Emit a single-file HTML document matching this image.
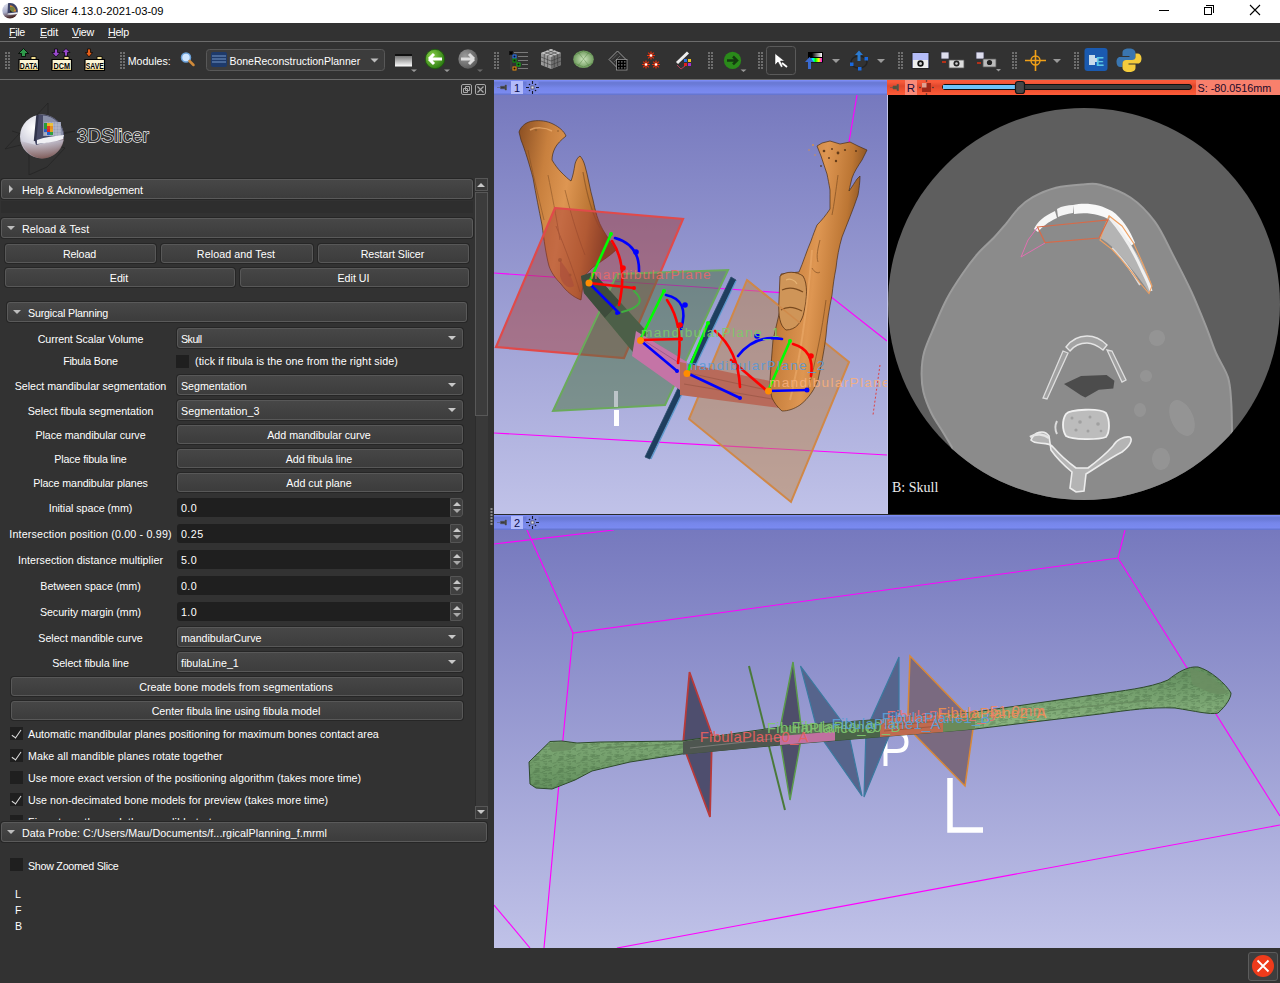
<!DOCTYPE html>
<html><head><meta charset="utf-8">
<style>
*{box-sizing:border-box;margin:0;padding:0}
html,body{width:1280px;height:983px;overflow:hidden;background:#323232;font-family:"Liberation Sans",sans-serif;color:#ffffff;font-size:10.7px}
.a{position:absolute}
.t{position:absolute;white-space:nowrap;line-height:12px}
.btn{position:absolute;border:1px solid #585858;border-radius:3px;background:linear-gradient(#464646,#3c3c3c);box-shadow:0 0 0 1px #262626}
.btn span{position:absolute;left:0;right:2px;top:3px;text-align:center;white-space:nowrap;line-height:12px}
.cmb{position:absolute;border:1px solid #585858;border-radius:3px;background:linear-gradient(#474747,#3d3d3d);box-shadow:0 0 0 1px #262626}
.cmb span{position:absolute;left:3px;top:4px;white-space:nowrap;line-height:12px}
.cmb i{position:absolute;right:6px;top:7px;width:0;height:0;border-left:4px solid transparent;border-right:4px solid transparent;border-top:4px solid #c8c8c8}
.spn{position:absolute;background:#1f1f1f;border-radius:3px}
.spn span{position:absolute;left:4px;top:4px;white-space:nowrap;line-height:12px}
.spn b{position:absolute;right:0;top:0;bottom:0;width:13px;background:#404040;border:1px solid #555;border-radius:0 3px 3px 0}
.spn b:before{content:"";position:absolute;left:2px;top:3px;border-left:4px solid transparent;border-right:4px solid transparent;border-bottom:4px solid #c8c8c8}
.spn b:after{content:"";position:absolute;left:2px;top:10px;border-left:4px solid transparent;border-right:4px solid transparent;border-top:4px solid #a8a8a8}
.chk{position:absolute;width:13px;height:13px;background:#1f1f1f}
.chk.on:after{content:"";position:absolute;left:4px;top:1px;width:4px;height:9px;border-right:1.6px solid #e0e0e0;border-bottom:1.6px solid #e0e0e0;transform:rotate(35deg)}
.lbl{position:absolute;width:176px;text-align:center;white-space:nowrap;line-height:12px}
.coll{position:absolute;border:1px solid #5a5a5a;border-radius:3px;background:linear-gradient(#474747,#3c3c3c);box-shadow:0 0 0 1px #262626}
.coll span{position:absolute;left:20px;top:4px;white-space:nowrap;line-height:12px}
.tri-r{position:absolute;left:7px;top:5px;border-top:4px solid transparent;border-bottom:4px solid transparent;border-left:4px solid #bdbdbd}
.tri-d{position:absolute;left:5px;top:7px;border-left:4px solid transparent;border-right:4px solid transparent;border-top:4px solid #bdbdbd}
.grip{position:absolute;width:6px;background-image:radial-gradient(circle,#6a6a6a 0.9px,transparent 1.1px);background-size:3px 3px}
.ic{position:absolute}
</style></head><body>
<!-- title bar -->
<div class="a" style="left:0;top:0;width:1280px;height:23px;background:#fff"></div>
<svg class="a" style="left:0;top:0" width="22" height="23"><defs><linearGradient id="tsp" x1="0" y1="0" x2="0.3" y2="1"><stop offset="0" stop-color="#e8eaf4"/><stop offset="0.6" stop-color="#a8acc8"/><stop offset="1" stop-color="#4a2a2a"/></linearGradient></defs>
<circle cx="10" cy="10.8" r="7.7" fill="url(#tsp)"/>
<path d="M8 3.3C9 3.1 9.5 3 10 3C14.3 3 17.7 6.5 17.7 10.8L17.7 12.5L7.5 13.8Z" fill="#3e4466"/>
<path d="M10 5.2C13 5.5 15.8 8 16 11.5L10.3 12Z" fill="#e08a30"/>
<path d="M10 7L13 6.5L15 9L13 12L10.3 12Z" fill="#2a7a4a" opacity="0.6"/>
<path d="M10 10L12 12L10.3 12Z" fill="#111"/>
<path d="M7.8 13.5L17.6 12.3L17 14C14 14.6 10 14.8 7.5 14.5Z" fill="#f0f0f4"/>
</svg>
<div class="t" style="left:23px;top:5px;color:#000;font-size:11.2px">3D Slicer 4.13.0-2021-03-09</div>
<div class="a" style="left:1159px;top:10px;width:10px;height:1px;background:#000"></div>
<div class="a" style="left:1204px;top:7px;width:8px;height:8px;border:1px solid #000;background:#fff"></div>
<div class="a" style="left:1206px;top:5px;width:8px;height:8px;border-top:1px solid #000;border-right:1px solid #000"></div>
<svg class="a" style="left:1249px;top:4px" width="12" height="12"><path d="M1 1L11 11M11 1L1 11" stroke="#000" stroke-width="1.1"/></svg>

<!-- menubar -->
<div class="a" style="left:0;top:23px;width:1280px;height:18px;background:#323232"></div>
<div class="t" style="left:9px;top:26px;font-size:10.7px;letter-spacing:-0.380px">File</div>
<div class="t" style="left:40px;top:26px;font-size:10.7px;letter-spacing:-0.104px">Edit</div>
<div class="t" style="left:72px;top:26px;font-size:10.7px;letter-spacing:-0.268px">View</div>
<div class="t" style="left:108px;top:26px;font-size:10.7px;letter-spacing:-0.295px">Help</div>
<div class="a" style="left:9px;top:37px;width:7px;height:1px;background:#ddd"></div><div class="a" style="left:40px;top:37px;width:7px;height:1px;background:#ddd"></div><div class="a" style="left:72px;top:37px;width:7px;height:1px;background:#ddd"></div><div class="a" style="left:108px;top:37px;width:8px;height:1px;background:#ddd"></div>
<div class="a" style="left:0;top:41px;width:1280px;height:1px;background:#6c6c6c"></div>
<div class="a" style="left:0;top:79px;width:1280px;height:1px;background:#6c6c6c"></div>

<!-- left panel -->
<svg class="a" style="left:0;top:95px" width="80" height="80">
<g stroke="#242424" stroke-width="0.8" fill="none"><path d="M5 54L48 8L48 40L75 36L5 54"/><path d="M12 36L65 53L47 72L29 80"/><path d="M29 28V80"/></g>
<defs><radialGradient id="sph" cx="0.32" cy="0.3" r="0.85"><stop offset="0" stop-color="#ffffff"/><stop offset="0.45" stop-color="#d4d4e0"/><stop offset="0.8" stop-color="#9a8c98"/><stop offset="1" stop-color="#6a4a48"/></radialGradient>
<linearGradient id="sphb" x1="0" y1="0" x2="0" y2="1"><stop offset="0" stop-color="#c8c8d8"/><stop offset="1" stop-color="#7a5048"/></linearGradient></defs>
<circle cx="42" cy="41.5" r="22" fill="url(#sph)"/>
<path d="M20.5 46C24 55 32 63.5 42 63.5C52 63.5 61 56 63.5 45L36 50Z" fill="url(#sphb)" opacity="0.7"/>
<path d="M37.5 20C39.5 19.6 41 19.5 42 19.5C54 19.5 64 29.5 64 41.5L64 43L36 50L34.5 45Z" fill="#474a66"/>
<path d="M43 20.5C54 21 63 30 63.5 41L43 41Z" fill="#8a90a8"/>
<path d="M44 27h17v14h-17z" fill="#9aa0b8"/><path d="M44 30h17M44 33h17M44 36h17M44 39h17M47 27v14M50 27v14M53 27v14M56 27v14M59 27v14" stroke="#c8ccd8" stroke-width="0.5"/>
<g><rect x="44" y="28" width="3" height="3" fill="#2a9a3a"/><rect x="47" y="28" width="3" height="3" fill="#e8b820"/><rect x="50" y="28" width="3" height="3" fill="#e8c040"/><rect x="44" y="31" width="3" height="3" fill="#2a9a3a"/><rect x="47" y="31" width="3" height="3" fill="#e03a20"/><rect x="50" y="31" width="3" height="3" fill="#e89020"/><rect x="44" y="34" width="3" height="3" fill="#2a60c8"/><rect x="47" y="34" width="3" height="3" fill="#e02a20"/><rect x="50" y="34" width="3" height="3" fill="#e8a020"/><rect x="47" y="37" width="3" height="3" fill="#2060d0"/><rect x="50" y="37" width="3" height="3" fill="#30a040"/></g>
<path d="M37 45C45 42 55 41 64 40L63 44C55 47 45 48 37 49Z" fill="#f0f0f4"/>
<path d="M37.5 20L35 46" stroke="#30334a" stroke-width="2.5"/>
</svg>
<div class="t" style="left:77px;top:126px;font-size:19px;line-height:19px;color:#2e2e2e;-webkit-text-stroke:1.3px #f0f0f0;paint-order:stroke fill">3DSlicer</div>
<div class="a" style="left:461px;top:84px;width:11px;height:11px;border:1px solid #a8a8a8;border-radius:2px"></div>
<div class="a" style="left:475px;top:84px;width:11px;height:11px;border:1px solid #a8a8a8;border-radius:2px"></div>
<svg class="a" style="left:475px;top:84px" width="11" height="11"><path d="M2.5 2.5L8.5 8.5M8.5 2.5L2.5 8.5" stroke="#a8a8a8" stroke-width="1.2"/></svg>
<svg class="a" style="left:461px;top:84px" width="11" height="11"><path d="M4.5 2.5h4v4h-4zM2.5 4.5h4v4h-4z" fill="none" stroke="#a8a8a8" stroke-width="1"/></svg>
<div class="coll" style="left:1px;top:179px;width:472px;height:20px"><i class="tri-r"></i><span style="letter-spacing:-0.040px">Help &amp; Acknowledgement</span></div>
<div class="a" style="left:1px;top:201px;width:472px;height:12px;background:#2e2e2e"></div>
<div class="coll" style="left:1px;top:218px;width:472px;height:20px"><i class="tri-d"></i><span style="letter-spacing:0.074px">Reload &amp; Test</span></div>
<div class="btn" style="left:5px;top:244px;width:151px;height:19px"><span style="letter-spacing:-0.111px">Reload</span></div>
<div class="btn" style="left:161px;top:244px;width:152px;height:19px"><span style="letter-spacing:0.084px">Reload and Test</span></div>
<div class="btn" style="left:318px;top:244px;width:151px;height:19px"><span style="letter-spacing:-0.039px">Restart Slicer</span></div>
<div class="btn" style="left:5px;top:268px;width:230px;height:19px"><span style="letter-spacing:-0.004px">Edit</span></div>
<div class="btn" style="left:240px;top:268px;width:229px;height:19px"><span style="letter-spacing:-0.010px">Edit UI</span></div>
<div class="coll" style="left:7px;top:302px;width:460px;height:20px"><i class="tri-d"></i><span style="letter-spacing:-0.181px">Surgical Planning</span></div>
<div class="a" style="left:0;top:323px;width:474px;height:497px;overflow:hidden">
<div class="lbl" style="left:2.5px;top:10px;letter-spacing:-0.096px">Current Scalar Volume</div>
<div class="cmb" style="left:177px;top:5px;width:286px;height:20px"><span style="letter-spacing:-0.533px">Skull</span><i></i></div>
<div class="lbl" style="left:2.5px;top:32px;letter-spacing:-0.213px">Fibula Bone</div>
<div class="chk" style="left:176px;top:32px"></div>
<div class="t" style="left:195px;top:32px;letter-spacing:0.111px">(tick if fibula is the one from the right side)</div>
<div class="lbl" style="left:2.5px;top:57px;letter-spacing:-0.039px">Select mandibular segmentation</div>
<div class="cmb" style="left:177px;top:52px;width:286px;height:20px"><span style="letter-spacing:-0.029px">Segmentation</span><i></i></div>
<div class="lbl" style="left:2.5px;top:82px;letter-spacing:0.013px">Select fibula segmentation</div>
<div class="cmb" style="left:177px;top:77px;width:286px;height:20px"><span style="letter-spacing:0.047px">Segmentation_3</span><i></i></div>
<div class="lbl" style="left:2.5px;top:106px;letter-spacing:-0.076px">Place mandibular curve</div>
<div class="btn" style="left:177px;top:102px;width:286px;height:19px"><span style="letter-spacing:-0.023px">Add mandibular curve</span></div>
<div class="lbl" style="left:2.5px;top:130px;letter-spacing:-0.151px">Place fibula line</div>
<div class="btn" style="left:177px;top:126px;width:286px;height:19px"><span style="letter-spacing:-0.049px">Add fibula line</span></div>
<div class="lbl" style="left:2.5px;top:154px;letter-spacing:-0.110px">Place mandibular planes</div>
<div class="btn" style="left:177px;top:150px;width:286px;height:19px"><span style="letter-spacing:-0.005px">Add cut plane</span></div>
<div class="lbl" style="left:2.5px;top:179px;letter-spacing:-0.041px">Initial space (mm)</div>
<div class="spn" style="left:177px;top:175px;width:286px;height:19px"><span style="letter-spacing:0.381px">0.0</span><b></b></div>
<div class="lbl" style="left:2.5px;top:205px;letter-spacing:0.179px">Intersection position (0.00 - 0.99)</div>
<div class="spn" style="left:177px;top:201px;width:286px;height:19px"><span style="letter-spacing:0.425px">0.25</span><b></b></div>
<div class="lbl" style="left:2.5px;top:231px;letter-spacing:0.039px">Intersection distance multiplier</div>
<div class="spn" style="left:177px;top:227px;width:286px;height:19px"><span style="letter-spacing:0.381px">5.0</span><b></b></div>
<div class="lbl" style="left:2.5px;top:257px;letter-spacing:-0.032px">Between space (mm)</div>
<div class="spn" style="left:177px;top:253px;width:286px;height:19px"><span style="letter-spacing:0.381px">0.0</span><b></b></div>
<div class="lbl" style="left:2.5px;top:283px;letter-spacing:-0.047px">Security margin (mm)</div>
<div class="spn" style="left:177px;top:279px;width:286px;height:19px"><span style="letter-spacing:0.381px">1.0</span><b></b></div>
<div class="lbl" style="left:2.5px;top:309px;letter-spacing:-0.040px">Select mandible curve</div>
<div class="cmb" style="left:177px;top:304px;width:286px;height:20px"><span style="letter-spacing:-0.059px">mandibularCurve</span><i></i></div>
<div class="lbl" style="left:2.5px;top:334px;letter-spacing:-0.068px">Select fibula line</div>
<div class="cmb" style="left:177px;top:329px;width:286px;height:20px"><span style="letter-spacing:0.013px">fibulaLine_1</span><i></i></div>
<div class="btn" style="left:11px;top:354px;width:452px;height:19px"><span style="letter-spacing:0.017px">Create bone models from segmentations</span></div>
<div class="btn" style="left:11px;top:378px;width:452px;height:19px"><span style="letter-spacing:-0.017px">Center fibula line using fibula model</span></div>
<div class="chk on" style="left:10px;top:404px"></div>
<div class="t" style="left:28px;top:405px;letter-spacing:0.004px">Automatic mandibular planes positioning for maximum bones contact area</div>
<div class="chk on" style="left:10px;top:426px"></div>
<div class="t" style="left:28px;top:427px;letter-spacing:0.038px">Make all mandible planes rotate together</div>
<div class="chk" style="left:10px;top:448px"></div>
<div class="t" style="left:28px;top:449px;letter-spacing:0.060px">Use more exact version of the positioning algorithm (takes more time)</div>
<div class="chk on" style="left:10px;top:470px"></div>
<div class="t" style="left:28px;top:471px;letter-spacing:0.031px">Use non-decimated bone models for preview (takes more time)</div>
<div class="chk" style="left:10px;top:492px"></div>
<div class="t" style="left:28px;top:493px;letter-spacing:0.185px">Fixe at pre-the-endothe-mandible-to-te</div>
</div>
<div class="a" style="left:475px;top:178px;width:13px;height:13px;border:1px solid #575757;background:#3a3a3a"></div>
<div class="a" style="left:477px;top:183px;border-left:4px solid transparent;border-right:4px solid transparent;border-bottom:4px solid #c8c8c8"></div>
<div class="a" style="left:475px;top:192px;width:13px;height:614px;background:#393939;border-left:1px solid #2c2c2c"></div>
<div class="a" style="left:475px;top:192px;width:13px;height:224px;border:1px solid #585858;background:#3c3c3c"></div>
<div class="a" style="left:475px;top:806px;width:13px;height:13px;border:1px solid #575757;background:#3a3a3a"></div>
<div class="a" style="left:477px;top:810px;border-left:4px solid transparent;border-right:4px solid transparent;border-top:4px solid #c8c8c8"></div>
<div class="coll" style="left:1px;top:822px;width:486px;height:20px"><i class="tri-d"></i><span style="letter-spacing:0.084px">Data Probe: C:/Users/Mau/Documents/f...rgicalPlanning_f.mrml</span></div>
<div class="chk" style="left:10px;top:858px"></div>
<div class="t" style="left:28px;top:860px;letter-spacing:-0.267px">Show Zoomed Slice</div>
<div class="t" style="left:15px;top:888px">L</div>
<div class="t" style="left:15px;top:904px">F</div>
<div class="t" style="left:15px;top:920px">B</div>
<div class="a" style="left:488px;top:80px;width:6px;height:868px;background:#323232"></div>
<svg class="a" style="left:489px;top:507px" width="5" height="20"><g fill="#8a8a8a"><rect x="1.5" y="1" width="2" height="2"/><rect x="1.5" y="4" width="2" height="2"/><rect x="1.5" y="7" width="2" height="2"/><rect x="1.5" y="10" width="2" height="2"/><rect x="1.5" y="13" width="2" height="2"/><rect x="1.5" y="16" width="2" height="2"/></g></svg>

<!-- views -->
<!-- VIEW 1 -->
<div class="a" style="left:494px;top:80px;width:393px;height:15px;background:linear-gradient(#7c8cf4 0,#7c8cf4 1px,#6a7ad6 2px,#6a7ad6 4px,#7686ea 8px,#7a8af0 13px,#6676d0 14px)"></div>
<svg class="a" style="left:494px;top:80px" width="60" height="15">
<path d="M3 7.5h3.5M6.5 6.2h4.5v2.6h-4.5zM11 5h1.5v5h-1.5z" fill="#3a3a3a" stroke="#555" stroke-width="0.5"/>
<rect x="17" y="1" width="12" height="13" fill="#b2bafa"/>
<text x="23" y="12" font-family="Liberation Sans" font-size="11" text-anchor="middle" fill="#0a0a4a">1</text>
<rect x="32.5" y="1" width="12" height="13" fill="#7a88e4"/>
<g stroke="#1a1a2a" stroke-width="1.1"><path d="M38.5 1v3M38.5 11v3M32 7.5h3M42 7.5h3"/></g><g fill="#1a1a2a"><circle cx="35.5" cy="4.5" r="0.8"/><circle cx="41.5" cy="4.5" r="0.8"/><circle cx="35.5" cy="10.5" r="0.8"/><circle cx="41.5" cy="10.5" r="0.8"/></g><rect x="37" y="6" width="3" height="3" fill="#dde" stroke="#445" stroke-width="0.7"/>
</svg>
<svg class="a" style="left:494px;top:95px" width="393" height="419">
<defs><linearGradient id="bg1" x1="0" y1="0" x2="0" y2="1"><stop offset="0" stop-color="#7679be"/><stop offset="1" stop-color="#c0c2e8"/></linearGradient>
<linearGradient id="bone1" x1="0" y1="0" x2="1" y2="0.3"><stop offset="0" stop-color="#8a4e22"/><stop offset="0.3" stop-color="#c8803e"/><stop offset="0.55" stop-color="#de9652"/><stop offset="0.8" stop-color="#bc7634"/><stop offset="1" stop-color="#74441c"/></linearGradient>
</defs>
<rect width="393" height="419" fill="url(#bg1)"/>
<g transform="translate(-494,-95)">
<g stroke="#ff00ff" stroke-width="1.15" fill="none"><path d="M494 433L887 455"/><path d="M494 273L830 296L887 341"/><path d="M857 95L849 142"/></g>
<!-- left ramus -->
<path d="M519 132C521 126 526 122 533 121C540 120 547 121 553 124C559 127 564 131 566 136C561 140 557 144 555 148C553 152 552 156 552 160C555 165 558 169 561 172C565 176 568 179 571 181C573 176 574 170 575 164C576 160 578 157 580 156C582 158 584 162 585 166C588 176 590 190 593 200C595 210 598 222 603 230C608 238 612 244 616 250C610 256 600 262 592 268C588 272 586 274 585 276C583 284 582 292 581 300C573 297 566 291 561 284C555 278 551 272 549 266C546 255 544 240 542 225C539 210 536 195 533 178C529 163 525 150 521 140Z" fill="url(#bone1)" stroke="#4a2e14" stroke-width="0.7"/>
<path d="M530 130C535 127 545 127 552 131" stroke="#f0b070" stroke-width="1.5" fill="none" opacity="0.7"/>
<path d="M583 172C586 190 590 210 600 228" stroke="#7a4a20" stroke-width="1.2" fill="none" opacity="0.6"/>
<g stroke="#7a4a20" stroke-width="0.9" fill="none" opacity="0.55"><path d="M528 150C532 170 538 195 544 220"/><path d="M548 175C552 195 556 215 560 240"/><path d="M565 190C570 210 576 232 585 255"/><path d="M556 226C566 250 574 272 580 292"/></g>
<g fill="#8a5a2a" opacity="0.6"><circle cx="536" cy="130" r="1.2"/><circle cx="558" cy="131" r="1"/><circle cx="560" cy="260" r="2"/><circle cx="570" cy="275" r="1.5"/></g>
<path d="M560 260C566 268 572 276 574 286C568 290 562 284 560 276Z" fill="#a85a40" opacity="0.6"/>
<!-- red plane -->
<path d="M555 208L683 219L624 358L496 347Z" fill="#a83c36" fill-opacity="0.47" stroke="#e04a4a" stroke-width="2.2"/>
<path d="M581 276L593 272L648 333L633 352L584 293Z" fill="#4a5a48"/>
<!-- green plane -->
<path d="M617 274L728 270L665 405L553 411Z" fill="#4a723e" fill-opacity="0.5" stroke="#6aaa5a" stroke-width="2"/>
<!-- blue sliver -->
<path d="M731 277L736 280L650 459L645 457Z" fill="#1e3e5e" stroke="#2a4a6a" stroke-width="0.8"/>
<path d="M736 281L651 459" stroke="#5a9ad0" stroke-width="1.2"/>
<!-- orange plane -->
<path d="M747 280L849 362L791 502L689 419Z" fill="#be8446" fill-opacity="0.5" stroke="#d08848" stroke-width="2"/>
<path d="M581 276L593 272L620 302L605 318L584 293Z" fill="#3e4c3c"/>
<path d="M605 318L620 302L648 333L633 352Z" fill="#4e5e4a" opacity="0.75"/>
<path d="M636 331L687 362L680 390L632 356Z" fill="#c474a6"/>
<path d="M640 338L684 366" stroke="#8a4a7a" stroke-width="1" opacity="0.6"/>
<path d="M680 362L775 382L780 408L680 395Z" fill="#b86a5a"/>
<path d="M684 372L776 392M684 384L778 400" stroke="#8a4a3a" stroke-width="0.8" opacity="0.6"/>
<!-- right ramus -->
<path d="M817 146L822 143L830 141L840 144L850 142L858 146L867 150L862 160C858 166 854 172 852 178C851 182 850 186 849 191C852 187 855 182 857 179C858 178 859 177 860 176C860 182 859 189 858 195C853 210 847 224 842 237C839 247 837 258 836 268C834 278 833 286 832 295C829 310 827 322 826 336C824 352 821 366 818 380C816 385 814 389 812 392C808 398 804 402 800 405C794 409 788 411 782 411C777 407 774 402 772 398C770 390 770 385 770 380C771 365 772 352 773 340C775 330 778 320 780 310C781 298 781 286 781 274C787 273 793 273 799 272C803 263 807 250 811 241C813 235 815 230 817 225C822 220 826 215 830 209C830 202 830 196 830 190C829 184 828 179 827 174C825 168 823 162 821 156Z" fill="url(#bone1)" stroke="#4a2e14" stroke-width="0.7"/>
<path d="M780 276C786 271 796 271 803 276C808 284 807 298 804 312C802 322 796 330 786 330C780 326 778 316 779 300Z" fill="#cf9558" stroke="#5a3414" stroke-width="0.8"/>
<path d="M782 290C788 287 796 288 803 292M781 310C787 306 795 307 802 311" stroke="#7a4a1e" stroke-width="1.2" fill="none"/>
<path d="M786 280C790 278 795 280 797 284" stroke="#f0c080" stroke-width="1.2" fill="none" opacity="0.7"/>
<path d="M812 250C808 300 800 360 790 400" stroke="#f0b070" stroke-width="2" fill="none" opacity="0.5"/>
<g fill="#4a2a10" opacity="0.8"><circle cx="824" cy="151" r="1.3"/><circle cx="832" cy="149" r="1"/><circle cx="838" cy="153" r="1.4"/><circle cx="845" cy="150" r="1.1"/><circle cx="829" cy="158" r="1"/><circle cx="836" cy="161" r="1.2"/><circle cx="856" cy="151" r="1"/><circle cx="821" cy="166" r="0.9"/></g>
<g fill="#d49050"><circle cx="813" cy="145" r="1"/><circle cx="809" cy="150" r="0.8"/><circle cx="815" cy="155" r="0.8"/></g>
<g stroke="#6a3e18" stroke-width="0.9" fill="none" opacity="0.6"><path d="M838 175C836 190 834 205 832 215"/><path d="M820 240C818 248 816 256 818 262"/><path d="M812 268C814 272 818 274 820 272"/><path d="M826 300C822 330 816 360 808 390"/></g>
<path d="M747 280L800 323" stroke="#d08848" stroke-width="1.5" opacity="0.8"/>
<!-- white I -->
<rect x="614" y="391" width="4" height="16" fill="#e8e8f0" opacity="0.6"/><rect x="614" y="410" width="5" height="16" fill="#ffffff"/>
<!-- markups -->
<g fill="none" stroke-width="2.6" stroke-linecap="round">
<path d="M589 283L611 234" stroke="#00ff00"/>
<path d="M612 241Q628 265 619 305M589 283L634 288" stroke="#ff0000"/>
<path d="M615 238Q640 245 639 272M589 283L619 313" stroke="#0000ff"/>
<path d="M634 291Q650 305 622 312" stroke="#40b040" stroke-width="2"/>
<path d="M640 340L664 291" stroke="#00ff00"/>
<path d="M667 300Q684 325 678 363M640 340L681 339" stroke="#ff0000"/>
<path d="M666 295Q690 300 681 329M640 340L677 371" stroke="#0000ff"/>
<path d="M687 373L708 323" stroke="#00ff00"/>
<path d="M715 331Q738 350 740 387M731 360L766 390" stroke="#ff0000"/>
<path d="M738 356Q755 334 782 339M687 373L740 398" stroke="#0000ff"/>
<path d="M768 391L790 341" stroke="#00ff00"/>
<path d="M793 344Q815 350 811 376" stroke="#ff0000"/>
<path d="M768 391L807 390" stroke="#0000ff"/>
</g>
<g fill="#0000ff"><circle cx="636" cy="252" r="2.8"/><circle cx="685" cy="305" r="2.8"/><circle cx="757" cy="336" r="2.8"/><circle cx="617" cy="313" r="2"/><circle cx="677" cy="371" r="2"/><circle cx="740" cy="398" r="2"/><circle cx="807" cy="390" r="2.5"/></g>
<g fill="#ff0000"><circle cx="623" cy="268" r="2.8"/><circle cx="680" cy="325" r="2.8"/><circle cx="811" cy="356" r="2.8"/><circle cx="634" cy="288" r="2"/><circle cx="681" cy="339" r="2"/></g>
<g fill="#00ff00"><circle cx="611" cy="234" r="2"/><circle cx="664" cy="291" r="2"/><circle cx="708" cy="323" r="2"/><circle cx="790" cy="341" r="2"/></g>
<path d="M880 365L873 415" stroke="#e04040" stroke-width="1" stroke-dasharray="2 2"/>
<g fill="#ff8c00"><circle cx="589" cy="283" r="3.5"/><circle cx="640.5" cy="340.5" r="3.5"/><circle cx="687" cy="373.5" r="3.5"/><circle cx="768.5" cy="391" r="3.5"/></g>
<g font-family="Liberation Sans" font-size="13.7" letter-spacing="1.28" opacity="0.88">
<text x="590" y="279" fill="#e86a6a">mandibularPlane</text>
<text x="641" y="337" fill="#7ccc6a">mandibularPlane_1</text>
<text x="686" y="370" fill="#5a9ad8">mandibularPlane_2</text>
<text x="769" y="387" fill="#f8b07c">mandibularPlane</text>
</g>
</g>
</svg>
<!-- SLICE -->
<div class="a" style="left:887px;top:80px;width:393px;height:15px;background:linear-gradient(#f85a3a 0,#f85a3a 2px,#e0482c 6px,#f0502f 10px,#fa5a38 14px)"></div>
<svg class="a" style="left:887px;top:80px" width="393" height="15">
<path d="M3 7.5h3M6 6h4v3h-4zM10 4.5h1.5v6h-1.5z" fill="#553" stroke="#555" stroke-width="0.6"/>
<rect x="18" y="0" width="12" height="15" fill="#fa8a78"/>
<text x="24" y="12" font-family="Liberation Sans" font-size="11.5" text-anchor="middle" fill="#1a0a3a">R</text>
<rect x="35" y="3" width="9" height="9" fill="#a02818"/><rect x="35" y="3" width="4.5" height="4.5" fill="#e0a090"/>
<g fill="#333"><circle cx="39.5" cy="1" r="0.8"/><circle cx="39.5" cy="14" r="0.8"/><circle cx="33" cy="7.5" r="0.8"/><circle cx="46" cy="7.5" r="0.8"/></g>
<rect x="55.5" y="4.5" width="249" height="5" rx="2.5" fill="#3a3a3a" stroke="#111" stroke-width="1"/>
<rect x="56" y="5" width="72" height="4" fill="#6cc4fa"/>
<rect x="128.5" y="1.5" width="9" height="12" rx="2.5" fill="#474747" stroke="#151515" stroke-width="1.2"/>
<rect x="309" y="0" width="84" height="15" fill="#f8806c"/>
<text x="310.5" y="12" font-family="Liberation Sans" font-size="10.8" fill="#1a0a2a">S: -80.0516mm</text>
</svg>
<svg class="a" style="left:887px;top:95px" width="393" height="419">
<rect width="393" height="419" fill="#000"/>
<rect x="0" y="0" width="1" height="419" fill="#c4c6ec"/>
<g transform="translate(-887,-95)">
<defs><clipPath id="cc"><circle cx="1084" cy="304" r="196"/></clipPath></defs>
<circle cx="1084" cy="304" r="196" fill="#5e5e5e"/>
<g clip-path="url(#cc)">
<path d="M951.9 447.0C950.2 444.1 945.0 435.6 941.5 429.8C938.0 424.1 934.1 418.9 931.1 412.5C928.1 406.1 925.0 398.3 923.4 391.7C921.8 385.1 921.5 379.3 921.6 372.7C921.7 366.1 922.0 359.8 924.2 352.0C926.4 344.2 930.8 334.9 934.6 326.0C938.4 317.1 942.2 307.5 946.9 298.8C951.5 290.0 957.3 281.3 962.5 273.8C967.7 266.2 972.8 259.4 978.0 253.4C983.2 247.4 989.1 242.7 993.8 237.8C998.4 232.9 1001.8 228.7 1006.0 223.8C1010.2 218.8 1014.3 212.4 1018.8 208.0C1023.2 203.6 1026.6 200.6 1032.8 197.2C1039.0 193.8 1047.6 189.9 1056.0 187.8C1064.4 185.7 1075.7 185.0 1083.0 184.5C1090.3 184.0 1092.1 182.5 1100.0 184.7C1107.9 186.9 1121.3 191.3 1130.5 197.5C1139.7 203.7 1147.9 212.2 1155.0 221.9C1162.1 231.6 1167.1 243.7 1173.2 255.4C1179.3 267.1 1185.9 279.8 1191.5 292.0C1197.1 304.2 1202.7 318.4 1206.8 328.6C1210.9 338.8 1212.5 344.9 1216.0 353.0C1219.5 361.1 1225.5 369.3 1228.0 377.4C1230.5 385.5 1230.5 392.6 1231.2 401.8C1231.9 411.0 1231.9 427.3 1232.0 432.4L1240 520L940 520Z" fill="#8b8b8b" stroke="#9c9c9c" stroke-width="2"/>
</g>
<!-- bone arc -->
<path d="M1034 229C1037 222 1044 216 1055 211L1057 218C1048 222 1042 227 1038 232Z" fill="#f6f6f6"/>
<path d="M1057 209C1062 206 1068 205 1073 205L1073 213C1067 214 1062 215 1058 217Z" fill="#f4f4f4"/>
<path d="M1073 205C1085 202 1100 204 1112 211C1122 218 1130 230 1135 243L1129 247C1124 236 1118 227 1110 220C1100 214 1087 212 1074 214Z" fill="#f8f8f8"/>
<path d="M1100 238C1108 242 1116 250 1126 262C1136 274 1144 284 1149 293L1152 286C1148 272 1140 258 1132 246C1124 236 1116 226 1109 216L1104 228Z" fill="#b4b4b4"/>
<path d="M1110 218C1122 232 1134 252 1142 270C1146 278 1150 286 1151 291" fill="none" stroke="#f0f0f0" stroke-width="3"/>
<path d="M1112 248C1120 256 1130 268 1140 285" fill="none" stroke="#dcdcdc" stroke-width="2"/>
<path d="M1109 215.8L1122 226L1133.6 243.2L1143 264L1152 286L1149 293.5L1140 283L1130.5 270.7L1120 258L1112 249.3L1100 240L1104 228Z" fill="none" stroke="#f0a060" stroke-width="1.1"/>
<path d="M1037.5 227L1108 220L1099 238L1045 242.5Z" fill="none" stroke="#d86a48" stroke-width="1.2"/>
<path d="M1037 228L1028 240L1021 257L1045 243" fill="none" stroke="#e070b0" stroke-width="1"/>
<!-- hyoid -->
<g fill="#969696" opacity="0.9"><ellipse cx="1157" cy="338" rx="8" ry="8"/><ellipse cx="1146" cy="376" rx="6" ry="6"/><ellipse cx="1182" cy="418" rx="11" ry="19" transform="rotate(-25 1182 418)"/><ellipse cx="1161" cy="459" rx="9" ry="11"/><ellipse cx="1140" cy="410" rx="6" ry="7"/></g>
<path d="M1066 347C1072 339 1080 336 1087 336C1095 336 1102 340 1107 345L1103 350C1098 346 1092 343 1087 343C1080 343 1074 346 1070 351Z" fill="#a4a4a4" stroke="#e4e4e4" stroke-width="1.4"/>
<path d="M1063 351L1068 353L1047 399L1043 398Z" fill="#a0a0a0" stroke="#dedede" stroke-width="1.3"/>
<path d="M1107 350L1112 351L1126 380L1122 382Z" fill="#a0a0a0" stroke="#dedede" stroke-width="1.3"/>
<path d="M1064 384L1081 376L1106.6 375L1114.4 380.7L1113.3 388.5L1098.8 389.7L1085.3 397.5L1080.9 395.3Z" fill="#4c4c4c"/>
<!-- vertebra -->
<path d="M1066 414C1070 409 1100 408 1106 413C1110 420 1110 432 1106 437C1098 440 1072 440 1066 436C1062 430 1062 420 1066 414Z" fill="#bcbcbc" stroke="#f0f0f0" stroke-width="1.8"/>
<g fill="#9a9a9a" opacity="0.8"><circle cx="1072" cy="418" r="1.5"/><circle cx="1080" cy="422" r="1.8"/><circle cx="1090" cy="417" r="1.5"/><circle cx="1098" cy="424" r="1.8"/><circle cx="1076" cy="430" r="1.6"/><circle cx="1088" cy="431" r="1.5"/><circle cx="1101" cy="431" r="1.3"/></g>
<path d="M1057 421C1055 425 1055 430 1057 434" stroke="#dcdcdc" stroke-width="2" fill="none"/>
<path d="M1031 440C1034 432 1044 429 1049 436L1051 450C1058 460 1066 467 1072 472L1070 488L1076 492L1084 491L1086 474C1096 468 1110 458 1122 452C1130 446 1133 440 1130 437C1124 436 1116 440 1113 446C1104 456 1096 462 1088 468L1076 468C1068 462 1060 455 1054 448C1048 440 1036 446 1031 440Z" fill="#b4b4b4" stroke="#ececec" stroke-width="1.6"/>
<path d="M1030 437C1036 433 1044 434 1049 438" stroke="#e4e4e4" stroke-width="2.5" fill="none"/>
<text x="892" y="492" font-family="Liberation Serif" font-size="14" fill="#ececec">B: Skull</text>
</g>
</svg>
<!-- divider -->
<div class="a" style="left:494px;top:514px;width:786px;height:1px;background:#2a2a2a"></div>
<!-- VIEW 2 -->
<div class="a" style="left:494px;top:515px;width:786px;height:15px;background:linear-gradient(#7c8cf4 0,#7c8cf4 1px,#6a7ad6 2px,#6a7ad6 4px,#7686ea 8px,#7a8af0 13px,#6676d0 14px)"></div>
<svg class="a" style="left:494px;top:515px" width="60" height="15">
<path d="M3 7.5h3.5M6.5 6.2h4.5v2.6h-4.5zM11 5h1.5v5h-1.5z" fill="#3a3a3a" stroke="#555" stroke-width="0.5"/>
<rect x="17" y="1" width="12" height="13" fill="#b2bafa"/>
<text x="23" y="12" font-family="Liberation Sans" font-size="11" text-anchor="middle" fill="#0a0a4a">2</text>
<rect x="32.5" y="1" width="12" height="13" fill="#7a88e4"/>
<g stroke="#1a1a2a" stroke-width="1.1"><path d="M38.5 1v3M38.5 11v3M32 7.5h3M42 7.5h3"/></g><g fill="#1a1a2a"><circle cx="35.5" cy="4.5" r="0.8"/><circle cx="41.5" cy="4.5" r="0.8"/><circle cx="35.5" cy="10.5" r="0.8"/><circle cx="41.5" cy="10.5" r="0.8"/></g><rect x="37" y="6" width="3" height="3" fill="#dde" stroke="#445" stroke-width="0.7"/>
</svg>
<svg class="a" style="left:494px;top:530px" width="786" height="418">
<defs><linearGradient id="bg2" x1="0" y1="0" x2="0" y2="1"><stop offset="0" stop-color="#7679be"/><stop offset="1" stop-color="#c0c2e8"/></linearGradient>
<pattern id="fibtex" width="24" height="12" patternUnits="userSpaceOnUse"><path d="M5.7 6.5l3.1 0.2M15.0 0.8l2.0 0.7M6.2 2.8l5.0 -0.1M20.1 5.7l3.9 -0.7M15.2 10.4l3.6 0.5M16.1 0.8l4.3 0.2M7.2 0.4l4.6 -0.1M17.3 10.5l4.1 0.8M9.5 9.6l3.3 0.9M21.1 1.2l2.4 -0.6M23.2 5.2l3.9 -0.4M12.2 4.6l3.1 0.2M14.0 10.9l4.0 0.9M20.6 11.9l4.0 -0.7M20.7 11.6l4.7 0.1M17.1 2.5l4.5 0.1M6.8 0.8l4.6 1.0M2.1 9.6l3.2 -0.7M7.1 9.2l4.6 -0.9M14.7 0.5l4.2 -0.3M21.1 11.8l3.5 1.0M7.4 0.9l3.8 -0.9M4.7 4.9l3.8 -0.7M1.0 10.4l2.9 0.9M21.5 4.5l3.4 0.0M15.5 7.1l3.7 0.2M22.6 6.1l3.3 0.4M5.7 3.6l4.9 0.0M13.2 0.1l3.2 0.2M0.5 7.4l3.9 -0.9M15.1 5.6l4.0 -0.3M17.0 8.9l2.1 -0.9M16.2 11.6l2.8 -0.1M14.2 3.8l3.1 -0.4M8.9 7.1l2.9 -0.2M18.5 0.3l3.7 0.5M7.4 2.7l4.4 -0.5M4.5 5.2l4.1 -0.8M7.7 4.0l4.5 -0.1M20.5 2.0l3.0 0.3" stroke="#2a4a28" stroke-width="0.7" fill="none"/></pattern><linearGradient id="fib" x1="0" y1="0" x2="0" y2="1"><stop offset="0" stop-color="#628e5e"/><stop offset="0.45" stop-color="#88b27e"/><stop offset="1" stop-color="#64905e"/></linearGradient></defs>
<rect width="786" height="418" fill="url(#bg2)"/>
<g transform="translate(-494,-530)">
<g stroke="#ff00ff" stroke-width="1.15" fill="none">
<path d="M494 544L614 530"/><path d="M527 530L573 633L1118 558L1125 530"/><path d="M573 633L563 739L544 948"/><path d="M1118 558L1280 816"/><path d="M617 948L1280 825"/><path d="M494 905L530 948"/>
</g>
<!-- letter P -->
<path d="M885.5 766V733H897Q906.5 733 906.5 742Q906.5 751 897 751H886" fill="none" stroke="#ffffff" stroke-width="4"/>
<!-- planes -->
<path d="M689.5 672L712 735L710 817L683 745Z" fill="#4e4e6e" stroke="#b83a3a" stroke-width="1.8"/>
<path d="M749 666L785 810" stroke="#4a7a3a" stroke-width="2"/>
<path d="M793 662L802 734L790 800L779 734Z" fill="#4e4e6a" stroke="#5a9a4a" stroke-width="1.5"/>
<path d="M800.5 666L848 730L862 796L818 733Z" fill="#56648c" stroke="#3a7aa0" stroke-width="1.2"/>
<path d="M899 657L899 712L864 797L866 730Z" fill="#56648c" stroke="#3a7aa0" stroke-width="1.2"/>
<path d="M910 656L968 716L973 729L965 786L915 735L908 714Z" fill="#7a6a80" stroke="#d88838" stroke-width="1.5"/>
<!-- fibula -->
<path d="M682 741L600 742L577 743L562 741L550 741.5L529 762L530 784L536 788L552 789L575 780L592 771L630 762L682 754L780 745L975 729L1100 714C1130 710 1150 707 1175 708C1195 711 1210 715 1218 713C1226 706 1231 698 1231 693C1226 684 1210 670 1198 667C1188 666 1178 672 1168 680C1150 688 1120 691 1100 694L975 712L780 727Z" fill="url(#fib)" stroke="#2e4a2c" stroke-width="1"/>
<path d="M682 741L600 742L577 743L562 741L550 741.5L529 762L530 784L536 788L552 789L575 780L592 771L630 762L682 754L780 745L975 729L1100 714C1130 710 1150 707 1175 708C1195 711 1210 715 1218 713C1226 706 1231 698 1231 693C1226 684 1210 670 1198 667C1188 666 1178 672 1168 680C1150 688 1120 691 1100 694L975 712L780 727Z" fill="url(#fibtex)" opacity="0.3"/>
<path d="M548 743L562 742L577 744L570 750L552 752Z" fill="#6a8e62" opacity="0.9"/>
<path d="M1190 670C1200 668 1215 678 1228 692C1222 698 1205 692 1192 684Z" fill="#6a8e62" opacity="0.9"/>
<path d="M600 748C640 746 700 744 760 738L960 720L1150 700" fill="none" stroke="#5a7a52" stroke-width="1.5" opacity="0.5"/>
<path d="M683 741.5L780 727.5L780 745L683 754.5Z" fill="#4e5650"/>
<path d="M690 748L780 738" stroke="#8a8a88" stroke-width="1.2" opacity="0.7"/>
<path d="M780 727.5L835 723L835 740.5L780 745Z" fill="#5a7058"/>
<path d="M780 736L835 731.5L835 740.5L780 745Z" fill="#c070a0"/>
<path d="M835 723L880 719L880 737L835 740.5Z" fill="#4a6448"/>
<path d="M880 719L943 714L943 732L880 737Z" fill="#c06a4e"/>
<path d="M884 726L940 721M884 731L940 726" stroke="#8a4a34" stroke-width="0.8" opacity="0.7"/>
<path d="M943 714L975 712L975 729L943 732Z" fill="#6a8a5a"/>
<!-- L -->
<path d="M950 778V830H983" fill="none" stroke="#ffffff" stroke-width="5.5"/>
<g font-family="Liberation Sans" font-size="14.8" letter-spacing="0.33" opacity="0.92">
<text x="767" y="733" fill="#80c870">FibulaPlane0_B</text>
<text x="791.6" y="732" fill="#80c870">FibulaPlane0_B</text>
<text x="699.7" y="741.7" fill="#e86060">FibulaPlane0_A</text>
<text x="831.7" y="728.7" fill="#5aa0d8">FibulaPlane1_A</text>
<text x="886.6" y="720.5" fill="#e87070">FibulaPlane2_B</text>
<text x="881.7" y="723" fill="#5aa0d8">FibulaPlane1_B</text>
<text x="937.5" y="718" fill="#f09050">FibulaPlane2_A</text>
<text x="990" y="716" fill="#f08868">51.0mm</text>
</g>
</g>
</svg>
<svg class="a" style="left:0;top:42px" width="1280" height="37">
<g transform="translate(0,-42)">
<!-- grips -->
<g fill="#6e6e6e">
<path d="M5 52h2v2h-2zM8 52h2v2h-2zM5 55h2v2h-2zM8 55h2v2h-2zM5 58h2v2h-2zM8 58h2v2h-2zM5 61h2v2h-2zM8 61h2v2h-2zM5 64h2v2h-2zM8 64h2v2h-2zM5 67h2v2h-2zM8 67h2v2h-2z" id="gp"/>
<use href="#gp" x="115"/><use href="#gp" x="489"/><use href="#gp" x="703"/><use href="#gp" x="753"/><use href="#gp" x="893"/><use href="#gp" x="1007"/><use href="#gp" x="1069"/>
</g>
<!-- DATA -->
<g>
<path d="M18.5 53.5L23.5 48.5L28.5 53.5H25.5V56.5H21.5V53.5Z" fill="#2e9a4a" stroke="#000" stroke-width="0.8"/>
<path d="M31 56.5h5v3h-5z" fill="#f0dc90" stroke="#000" stroke-width="0.8"/>
<path d="M19 59.5H38.5V70.5H19Z" fill="#fbf4d4" stroke="#000" stroke-width="1.2"/>
<path d="M19.6 68.5H37.9V70H19.6Z" fill="#e8d080"/>
<text x="19.8" y="68.6" font-family="Liberation Sans" font-size="9.5" font-weight="bold" fill="#000" textLength="18" lengthAdjust="spacingAndGlyphs">DATA</text>
</g>
<g>
<path d="M52 52.5H54.5V49H57.5V52.5H60L56 57Z" fill="#9a4ad0" stroke="#000" stroke-width="0.7"/>
<path d="M62 52.5L66 48.5L70 52.5H67.5V56H64.5V52.5Z" fill="#9a4ad0" stroke="#000" stroke-width="0.7"/>
<path d="M64 56.5h5v3h-5z" fill="#f0dc90" stroke="#000" stroke-width="0.8"/>
<path d="M52 59.5H71.5V70.5H52Z" fill="#fbf4d4" stroke="#000" stroke-width="1.2"/>
<path d="M52.6 68.5H70.9V70H52.6Z" fill="#e8d080"/>
<text x="53.5" y="68.6" font-family="Liberation Sans" font-size="9.5" font-weight="bold" fill="#000" textLength="16.5" lengthAdjust="spacingAndGlyphs">DCM</text>
</g>
<g>
<path d="M85.5 52.5H87.5V49H90.5V52.5H92.5L89 57Z" fill="#e8601a" stroke="#000" stroke-width="0.7"/>
<path d="M97 56.5h5v3h-5z" fill="#f0dc90" stroke="#000" stroke-width="0.8"/>
<path d="M85 59.5H104.5V70.5H85Z" fill="#fbf4d4" stroke="#000" stroke-width="1.2"/>
<path d="M85.6 68.5H103.9V70H85.6Z" fill="#e8d080"/>
<text x="85.8" y="68.6" font-family="Liberation Sans" font-size="9.5" font-weight="bold" fill="#000" textLength="18" lengthAdjust="spacingAndGlyphs">SAVE</text>
</g>
<text x="127.7" y="64.5" font-family="Liberation Sans" font-size="10.6" fill="#ffffff">Modules:</text>
<!-- magnifier -->
<circle cx="186" cy="57.5" r="4.5" fill="#cfe6ff" stroke="#6aa0d8" stroke-width="1.5"/>
<path d="M189.5 61L193.5 65" stroke="#d08a3a" stroke-width="2.5" stroke-linecap="round"/>
<!-- module combo -->
<rect x="206.5" y="49.5" width="178" height="21" rx="3" fill="#3c3c3c" stroke="#585858" stroke-width="1"/>
<rect x="211" y="52" width="16" height="15" rx="2" fill="#1e3a6a"/>
<path d="M212 56h14M212 59h14M212 62h14" stroke="#8ab0e0" stroke-width="0.8"/>
<text x="229.4" y="64.5" font-family="Liberation Sans" font-size="10.5" fill="#ffffff">BoneReconstructionPlanner</text>
<path d="M370.5 58.5h8l-4 4z" fill="#bdbdbd"/>
<!-- layout -->
<defs><linearGradient id="lay" x1="0" y1="0" x2="0" y2="1"><stop offset="0" stop-color="#777"/><stop offset="1" stop-color="#fff"/></linearGradient>
<radialGradient id="grn" cx="0.35" cy="0.35" r="0.7"><stop offset="0" stop-color="#8ad04a"/><stop offset="1" stop-color="#2a7a10"/></radialGradient>
<radialGradient id="gry" cx="0.35" cy="0.35" r="0.7"><stop offset="0" stop-color="#9a9a9a"/><stop offset="1" stop-color="#5a5a5a"/></radialGradient>
<radialGradient id="gsp" cx="0.5" cy="0.5" r="0.6"><stop offset="0" stop-color="#d0e8c0"/><stop offset="1" stop-color="#5a8a48"/></radialGradient>
<linearGradient id="rain" x1="0" x2="1"><stop offset="0" stop-color="#00f"/><stop offset="0.3" stop-color="#0ff"/><stop offset="0.5" stop-color="#0f0"/><stop offset="0.75" stop-color="#ff0"/><stop offset="1" stop-color="#f0f"/></linearGradient>
<linearGradient id="gw" x1="0" x2="1"><stop offset="0" stop-color="#000"/><stop offset="1" stop-color="#fff"/></linearGradient>
</defs>
<rect x="395" y="54" width="17" height="2" fill="#111"/><rect x="395" y="56" width="17" height="10.5" fill="url(#lay)"/>
<g fill="#9a9a9a"><path d="M411 69.5h6l-3 2.5z"/><path d="M444 69.5h6l-3 2.5z"/><path d="M477 69.5h6l-3 2.5z" fill="#6a6a6a"/><path d="M740.5 69.5h6l-3 2.5z"/><path d="M832 59h8l-4 4z"/><path d="M877 59h8l-4 4z"/><path d="M1053 59h8l-4 4z"/></g>
<circle cx="435" cy="59" r="9.7" fill="url(#grn)" stroke="#1a5a0a" stroke-width="0.8"/>
<path d="M429 59L434 54M429 59L434 64M429 59H442" stroke="#fff" stroke-width="3" fill="none"/>
<circle cx="468" cy="59" r="9.7" fill="url(#gry)"/>
<path d="M474 59L469 54M474 59L469 64M474 59H461" stroke="#ddd" stroke-width="3" fill="none"/>
<!-- tree -->
<rect x="509.5" y="51.5" width="3" height="3" fill="#000" stroke="#111"/>
<g stroke="#7a7a7a" stroke-width="1"><path d="M514 52.5h14M518 56.5h10M518 60.5h10M522 64.5h6M518 68.5h10"/><path d="M511 55v14" stroke="#444"/></g>
<rect x="513" y="55" width="3" height="3" fill="#111" stroke="#2a7aff" stroke-width="1"/>
<rect x="513" y="59" width="3" height="3" fill="#111" stroke="#109a10" stroke-width="1"/>
<rect x="517" y="63" width="3" height="3" fill="#111" stroke="#10c010" stroke-width="1"/>
<rect x="513" y="67" width="3" height="3" fill="#111" stroke="#f09010" stroke-width="1"/>
<!-- cube -->
<path d="M541 53L551 49L561 53L561 65L551 69L541 65Z" fill="#9a9a9a"/>
<path d="M541 53L551 57L561 53L551 49Z" fill="#c4c4c4"/>
<path d="M551 57V69L561 65V53Z" fill="#6e6e6e"/>
<g stroke="#3a3a3a" stroke-width="0.6" fill="none"><path d="M544.3 54.3L554.3 50.3M547.6 55.6L557.6 51.6M544.3 51.7L554.3 55.7M547.6 50.3L557.6 54.3"/><path d="M541 57L551 61L561 57M541 61L551 65L561 61M544.3 54.3V66.3M547.6 55.6V67.6M554.3 55.7V67.7M557.6 54.3V66.3"/></g>
<ellipse cx="583.5" cy="59.3" rx="10.3" ry="8.8" fill="url(#gsp)"/>
<path d="M575 55L583.5 51L592 55M574 63L583.5 67L593 63M578 52L589 66M589 52L578 66" stroke="#4a7a3a" stroke-width="0.7" fill="none" opacity="0.6"/>
<!-- grid -->
<path d="M609 59.5L617.5 51L626 59.5L617.5 68Z" fill="none" stroke="#9a9a9a" stroke-width="1"/>
<path d="M612 59.5L617.5 54M614 62L620 56M617 65L623 59" stroke="#777" stroke-width="0.6"/>
<rect x="616.5" y="59.5" width="10.5" height="10.5" fill="#000" stroke="#9a9a9a" stroke-width="0.8"/>
<g fill="#6a6a6a"><circle cx="618.8" cy="61.8" r="0.9"/><circle cx="621.8" cy="61.8" r="0.9"/><circle cx="624.8" cy="61.8" r="0.9"/><circle cx="618.8" cy="64.8" r="0.9"/><circle cx="621.8" cy="64.8" r="0.9"/><circle cx="624.8" cy="64.8" r="0.9"/><circle cx="618.8" cy="67.8" r="0.9"/><circle cx="621.8" cy="67.8" r="0.9"/><circle cx="624.8" cy="67.8" r="0.9"/></g>
<!-- asterisks -->
<g stroke="#e8300a" stroke-width="1.2"><path d="M647 55.5h8M651 51.5v8M648.2 52.7l5.6 5.6M653.8 52.7l-5.6 5.6"/><path d="M642 64.5h8M646 60.5v8M643.2 61.7l5.6 5.6M648.8 61.7l-5.6 5.6"/><path d="M652 64.5h8M656 60.5v8M653.2 61.7l5.6 5.6M658.8 61.7l-5.6 5.6"/></g>
<g fill="#fff"><circle cx="651" cy="55.5" r="1.2"/><circle cx="646" cy="64.5" r="1.2"/><circle cx="656" cy="64.5" r="1.2"/></g>
<!-- pen -->
<path d="M677 63L688 52.5" stroke="#eee" stroke-width="3"/>
<rect x="684" y="59" width="3" height="3" fill="#2a70e0"/><rect x="688" y="59" width="3" height="3" fill="#f0c020"/><rect x="684" y="63" width="3" height="3" fill="#e02020"/><rect x="688" y="63" width="3" height="3" fill="#a030d0"/>
<path d="M677 65L681 69L685 66" stroke="#d04060" stroke-width="0.8" fill="none"/>
<!-- green circ arrow -->
<circle cx="732.5" cy="60.4" r="8.6" fill="#2a8a1a"/>
<path d="M727 60.4h8M733 56.5l4 3.9l-4 3.9" stroke="#143a10" stroke-width="2.5" fill="none"/>
<!-- selected pointer -->
<rect x="766.5" y="46.5" width="29" height="28" rx="3" fill="#343434" stroke="#5a5a5a" stroke-width="1"/>
<path d="M775 53.5L775 65L778 62L781 67.5L783 66.5L780.5 61L784.5 61Z" fill="#fff" stroke="#222" stroke-width="0.5"/>
<path d="M782 63L787 67" stroke="#fff" stroke-width="1.8"/>
<!-- color bar -->
<rect x="808" y="52" width="15" height="10.5" fill="#000"/>
<rect x="812" y="53" width="10" height="4" fill="url(#gw)"/>
<rect x="809" y="58" width="13" height="4" fill="url(#rain)"/>
<path d="M805 62L809.5 57L814 62H811V69H808V62Z" fill="#3a6ad0"/>
<!-- transform -->
<ellipse cx="859" cy="62" rx="8" ry="6" fill="none" stroke="#222" stroke-width="1.5"/>
<rect x="850" y="62.5" width="3.5" height="3.5" fill="#1a6ae0"/><rect x="864.5" y="57" width="3.5" height="3.5" fill="#1a6ae0"/><rect x="858" y="67" width="3.5" height="3.5" fill="#1a6ae0"/>
<path d="M855 55L859 50.5L863 55H860.5V61H857.5V55Z" fill="#2a7ad0"/>
<!-- cameras -->
<rect x="912" y="52.5" width="17" height="16" fill="#b4bcf8" stroke="#222" stroke-width="1"/>
<path d="M913 60h15v8h-15z" fill="#eee"/><circle cx="920.5" cy="63.5" r="3.2" fill="#111"/><circle cx="920.5" cy="63.5" r="1.5" fill="#ccc"/>
<path d="M941 52h8v7h-8z" fill="#dde" stroke="#334" stroke-width="0.8"/>
<path d="M949 60h15v8h-15z" fill="#ddd" stroke="#555" stroke-width="0.8"/><circle cx="956.5" cy="63.5" r="3" fill="#222"/><circle cx="956.5" cy="63.5" r="1.3" fill="#ccc"/>
<path d="M942 62h4" stroke="#e03010" stroke-width="1.5"/>
<path d="M976 52h8v7h-8z" fill="#dde" stroke="#334" stroke-width="0.8"/>
<path d="M983 59h13v8h-13z" fill="#bbb" stroke="#555" stroke-width="0.8"/><circle cx="989.5" cy="62.5" r="2.6" fill="#222"/>
<path d="M977 63h4" stroke="#e03010" stroke-width="1.5"/>
<path d="M996 69h5l-2.5 2.5z" fill="#9a9a9a"/>
<!-- crosshair -->
<g stroke="#f0a018" stroke-width="1.6"><path d="M1025 60.5h21M1035.5 50v21"/></g>
<circle cx="1035.5" cy="60.5" r="4.5" fill="none" stroke="#f0a018" stroke-width="1.4"/>
<!-- extension -->
<rect x="1084.5" y="48" width="23" height="23" rx="3" fill="#1a5ab0"/>
<path d="M1089 55h6v3h3v4h-3v3h-6z" fill="#c8dcec"/>
<text x="1096" y="66" font-family="Liberation Sans" font-size="12" font-weight="bold" fill="#5ac8e8">E</text>
<!-- python -->
<path d="M1129 48.5C1123 48.5 1122.5 51 1122.5 53V56H1129.5V57H1120C1117.5 57 1116.5 59.5 1116.5 62C1116.5 65 1118 67 1120.5 67H1122.5V63.5C1122.5 61.5 1124 60.5 1126 60.5H1132C1134 60.5 1135.5 59 1135.5 57V53C1135.5 50.5 1133.5 48.5 1129 48.5Z" fill="#3a76b0"/>
<path d="M1129 72C1135 72 1135.5 69.5 1135.5 67.5V64.5H1128.5V63.5H1138C1140.5 63.5 1141.5 61 1141.5 58.5C1141.5 55.5 1140 53.5 1137.5 53.5H1135.5V57C1135.5 59 1134 60 1132 60H1126C1124 60 1122.5 61.5 1122.5 63.5V67.5C1122.5 70 1124.5 72 1129 72Z" fill="#f4cc3c"/>
</g>
</svg>


<!-- status -->
<div class="a" style="left:0;top:948px;width:1280px;height:35px;background:#323232"></div>
<div class="a" style="left:1248px;top:952px;width:30px;height:29px;border:1px solid #5c5c5c;border-radius:3px;background:#3e3e3e"></div>
<svg class="a" style="left:1252px;top:955px" width="22" height="22"><circle cx="11" cy="11" r="11" fill="#ef3b1b"/><path d="M5.5 5.5L16.5 16.5M16.5 5.5L5.5 16.5" stroke="#fff" stroke-width="1.8"/></svg>
</body></html>
